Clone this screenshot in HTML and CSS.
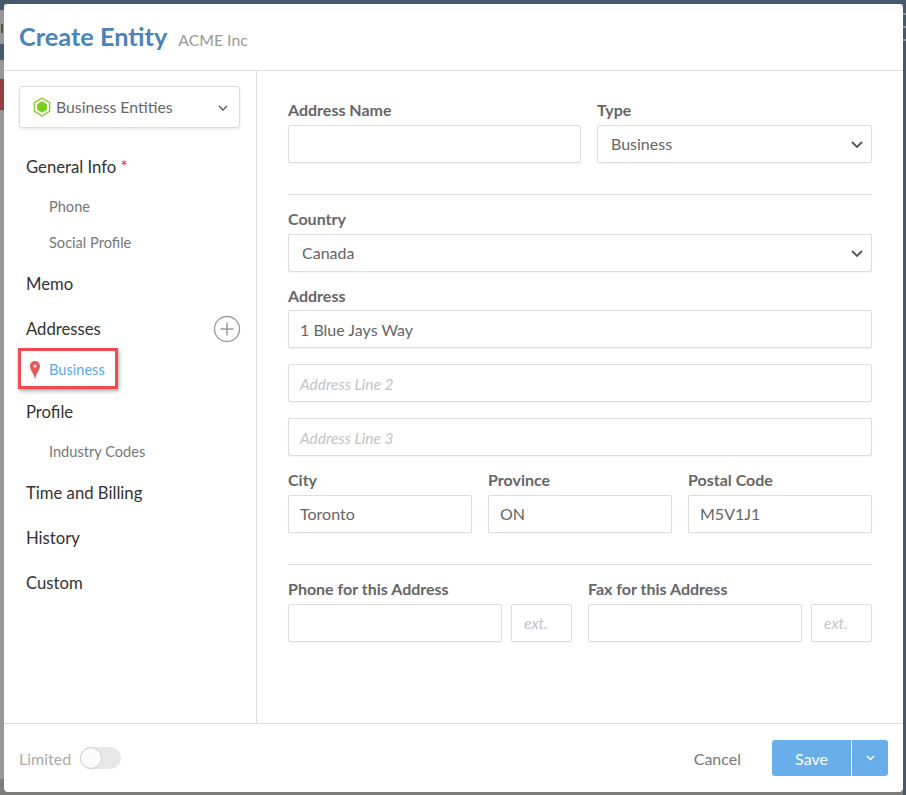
FILE: index.html
```html
<!DOCTYPE html>
<html lang="en">
<head>
<meta charset="utf-8">
<title>Create Entity</title>
<link rel="stylesheet" href="styles.css">
</head>
<body>
<div class="backdrop">
  <div class="bd bd-top"></div>
  <div class="bd bd-l1"></div>
  <div class="bd bd-l2"></div>
  <div class="bd bd-l3"></div>
  <div class="bd bd-l4"></div>
  <div class="bd bd-bottom"></div>
  <div class="bd bd-right"></div>
  <div class="bd bd-m1"></div>
  <div class="bd bd-m2"></div>
  <div class="bd bd-m3"></div>
</div>
<div class="modal">
  <header class="head">
    <h1>Create Entity</h1>
    <span class="sub">ACME Inc</span>
  </header>
  <div class="body">
    <aside class="side">
      <div class="picker">
        <svg class="hex" width="18" height="20" viewBox="0 0 18 20"><path d="M9 1.200 16.600 5.600V14.400L9 18.800 1.400 14.400V5.600Z" fill="none" stroke="#8ad02f" stroke-width="1.500"/><path d="M9 4.300 13.900 7.200V12.800L9 15.700 4.100 12.800V7.200Z" fill="#7ccb1f"/></svg>
        <span class="picker-text">Business Entities</span>
        <svg class="chev" width="10" height="6" viewBox="0 0 10 6"><path d="M1 1 5 5 9 1" fill="none" stroke="#555" stroke-width="1.400"/></svg>
      </div>
      <nav class="nav">
        <div class="item i-general">General Info <span class="req">*</span></div>
        <div class="subitem i-phone">Phone</div>
        <div class="subitem i-social">Social Profile</div>
        <div class="item i-memo">Memo</div>
        <div class="item i-addr">Addresses
          <svg class="plus" width="28" height="28" viewBox="0 0 28 28"><circle cx="14" cy="14" r="12.500" fill="none" stroke="#999" stroke-width="1.300"/><path d="M14 7.500V20.500M7.500 14H20.500" stroke="#999" stroke-width="1.500"/></svg>
        </div>
        <div class="active-wrap">
          <div class="active">
            <svg class="pin" width="10" height="18" viewBox="0 0 10 18"><path d="M5 0C2 0 0 2.200 0 5.200 0 9 3.800 12 5 18 6.200 12 10 9 10 5.200 10 2.200 8 0 5 0Z" fill="#e55a58"/><circle cx="5" cy="5" r="1.600" fill="#fbe3e3"/></svg>
            <span>Business</span>
          </div>
        </div>
        <div class="item i-profile">Profile</div>
        <div class="subitem i-industry">Industry Codes</div>
        <div class="item i-time">Time and Billing</div>
        <div class="item i-history">History</div>
        <div class="item i-custom">Custom</div>
      </nav>
    </aside>
    <main class="form">
      <div class="row two r-top">
        <div class="field"><label>Address Name</label><div class="input"></div></div>
        <div class="field"><label>Type</label><div class="input select">Business<svg width="12" height="7" viewBox="0 0 12 7"><path d="M1 1 6 6 11 1" fill="none" stroke="#555" stroke-width="1.800"/></svg></div></div>
      </div>
      <hr class="rule r1">
      <div class="field f-country"><label>Country</label><div class="input select">Canada<svg width="12" height="7" viewBox="0 0 12 7"><path d="M1 1 6 6 11 1" fill="none" stroke="#555" stroke-width="1.800"/></svg></div></div>
      <div class="field f-address"><label>Address</label><div class="input">1 Blue Jays Way</div></div>
      <div class="input ph line l2">Address Line 2</div>
      <div class="input ph line l3">Address Line 3</div>
      <div class="row three">
        <div class="field"><label>City</label><div class="input">Toronto</div></div>
        <div class="field"><label>Province</label><div class="input">ON</div></div>
        <div class="field"><label>Postal Code</label><div class="input">M5V1J1</div></div>
      </div>
      <hr class="rule r2">
      <div class="row phones">
        <div class="phone">
          <div class="field grow"><label>Phone for this Address</label><div class="input"></div></div>
          <div class="input ph ext">ext.</div>
        </div>
        <div class="phone">
          <div class="field grow"><label>Fax for this Address</label><div class="input"></div></div>
          <div class="input ph ext">ext.</div>
        </div>
      </div>
    </main>
  </div>
  <footer class="foot">
    <div class="limited">
      <span>Limited</span>
      <span class="toggle"><span class="knob"></span></span>
    </div>
    <div class="actions">
      <span class="cancel">Cancel</span>
      <div class="save">
        <span class="save-main">Save</span>
        <span class="save-drop"><svg width="9" height="6" viewBox="0 0 9 6"><path d="M1 1 4.500 4.500 8 1" fill="none" stroke="#fff" stroke-width="1.400"/></svg></span>
      </div>
    </div>
  </footer>
</div>
</body>
</html>
```
FILE: styles.css
```css
* { box-sizing: border-box; }
html, body { margin: 0; height: 100%; }
body {
  background: #979797;
  font-family: Lato, "Open Sans", sans-serif;
  color: #666;
  overflow: hidden;
}
.backdrop { position: absolute; inset: 0; }
.bd { position: absolute; }
.bd-top { left: 0; top: 0; width: 906px; height: 4px; background: #45586c; }
.bd-l1 { left: 0; top: 44px; width: 4px; height: 16px; background: #45586c; }
.bd-l2 { left: 0; top: 79px; width: 4px; height: 31px; background: #943f41; }
.bd-l3 { left: 0; top: 0; width: 4px; height: 10px; background: #45586c; }
.bd-l4 { left: 1px; top: 24px; width: 2px; height: 9px; background: #5d5142; }
.bd-bottom { left: 0; top: 779px; width: 906px; height: 16px; background: #7d7d7a; }
.bd-right { right: 0; top: 0; width: 3px; height: 795px; background: #45586c; }
.bd-m1, .bd-m2, .bd-m3 { right: 0; width: 3px; height: 2px; background: #8a96a3; }
.bd-m1 { top: 13px; }
.bd-m2 { top: 26px; }
.bd-m3 { top: 39px; }

.modal {
  position: absolute;
  left: 4px;
  top: 4px;
  width: 899px;
  height: 788px;
  background: #fff;
  border-radius: 4px;
  display: flex;
  flex-direction: column;
}
.head {
  height: 67px;
  flex: none;
  border-bottom: 1px solid #ddd;
  padding: 15px 0 0 15px;
  display: flex;
  align-items: baseline;
  gap: 11px;
}
.head h1 {
  margin: 0;
  font-size: 25.300px;
  line-height: 34px;
  font-weight: 700;
  color: #4a84b8;
}
.sub { font-size: 15.800px; color: #999; }

.body { flex: 1; display: flex; min-height: 0; }
.side {
  width: 253px;
  flex: none;
  border-right: 1px solid #ddd;
  padding: 15px 16px 0 15px;
}
.picker {
  height: 42px;
  border: 1px solid #ddd;
  border-radius: 3px;
  box-shadow: 0 1px 3px rgba(0,0,0,.1);
  background: #fff;
  display: flex;
  align-items: center;
  padding: 0 11px 0 13px;
  font-size: 15.800px;
  color: #666;
}
.picker-text { margin-left: 5px; flex: 1; padding-bottom: 2px; }
.chev { margin-top: 2px; }
.nav { position: relative; }
.item { font-size: 16.700px; line-height: 22px; color: #333; padding-left: 7px; position: relative; }
.subitem { font-size: 14.600px; line-height: 20px; color: #777; padding-left: 30px; }
.req { color: #f01f24; }
.i-general { margin-top: 28px; }
.i-phone { margin-top: 19px; }
.i-social { margin-top: 16px; }
.i-memo { margin-top: 20px; }
.i-addr { margin-top: 23px; }
.plus { position: absolute; right: -1px; top: -3px; }
.active-wrap { margin-top: 8px; height: 41px; position: relative; }
.active {
  position: absolute;
  left: -1px;
  top: 0;
  width: 100px;
  height: 41px;
  border: 3px solid #f04b4f;
  box-shadow: 1px 2px 4px rgba(0,0,0,.35);
  display: flex;
  align-items: center;
  gap: 9px;
  padding: 2px 0 0 9px;
  font-size: 14.600px;
  color: #5ba9ea;
}
.pin { flex: none; }
.i-profile { margin-top: 12px; }
.i-industry { margin-top: 19px; }
.i-time { margin-top: 20px; }
.i-history { margin-top: 23px; }
.i-custom { margin-top: 23px; }

.form { flex: 1; padding: 29px 31px 0 31px; min-width: 0; }
.field label, .field > label {
  display: block;
  font-size: 16px;
  font-weight: 700;
  line-height: 20px;
  color: #666;
  margin-bottom: 5px;
}
.input {
  height: 38px;
  border: 1px solid #ddd;
  border-radius: 2px;
  box-shadow: 0 1px 2px rgba(0,0,0,.05);
  background: #fff;
  font-size: 16px;
  color: #666;
  display: flex;
  align-items: center;
  padding: 0 11px;
}
.select { justify-content: space-between; padding: 0 8px 2px 13px; }
.select svg { margin-top: 2px; }
.ph { font-style: italic; color: #c4c4c4; font-size: 15.500px; }
.line { padding-top: 2px; }
.row { display: flex; }
.two { gap: 16px; }
.two .field:first-child { width: 293px; }
.two .field:last-child { flex: 1; }
.rule { border: 0; border-top: 1px solid #ddd; margin: 0; }
.r1 { margin-top: 31px; }
.f-country { margin-top: 14px; }
.f-address { margin-top: 14px; }
.f-address label { margin-bottom: 4px; }
.l2 { margin-top: 16px; }
.l3 { margin-top: 16px; }
.three { gap: 16px; margin-top: 14px; }
.three .field { flex: 1; }
.three .input { padding-bottom: 2px; }
.r2 { margin-top: 31px; }
.phones { margin-top: 14px; gap: 16px; }
.phone { flex: 1; display: flex; gap: 9px; align-items: flex-end; }
.grow { flex: 1; }
.ext { width: 61px; flex: none; padding-left: 12px; }

.foot {
  height: 69px;
  flex: none;
  border-top: 1px solid #ddd;
  display: flex;
  align-items: center;
  justify-content: space-between;
  padding: 0 15px;
}
.limited { display: flex; align-items: center; gap: 9px; font-size: 16px; color: #aaa; }
.toggle {
  width: 41px;
  height: 22px;
  border-radius: 11px;
  background: #e8e8e8;
  position: relative;
  display: block;
}
.knob {
  position: absolute;
  left: 0;
  top: 0;
  width: 22px;
  height: 22px;
  border-radius: 50%;
  background: #fbfbfb;
  border: 1px solid #ccc;
}
.actions { display: flex; align-items: center; gap: 31px; }
.cancel { font-size: 16px; color: #777; }
.save {
  display: flex;
  height: 36px;
  width: 116px;
  background: #68aeea;
  border-radius: 3px;
  color: #fff;
  font-size: 16px;
}
.save-main {
  width: 80px;
  border-right: 1px solid #fff;
  display: flex;
  align-items: center;
  justify-content: center;
}
.save-drop { flex: 1; display: flex; align-items: center; justify-content: center; }
```
